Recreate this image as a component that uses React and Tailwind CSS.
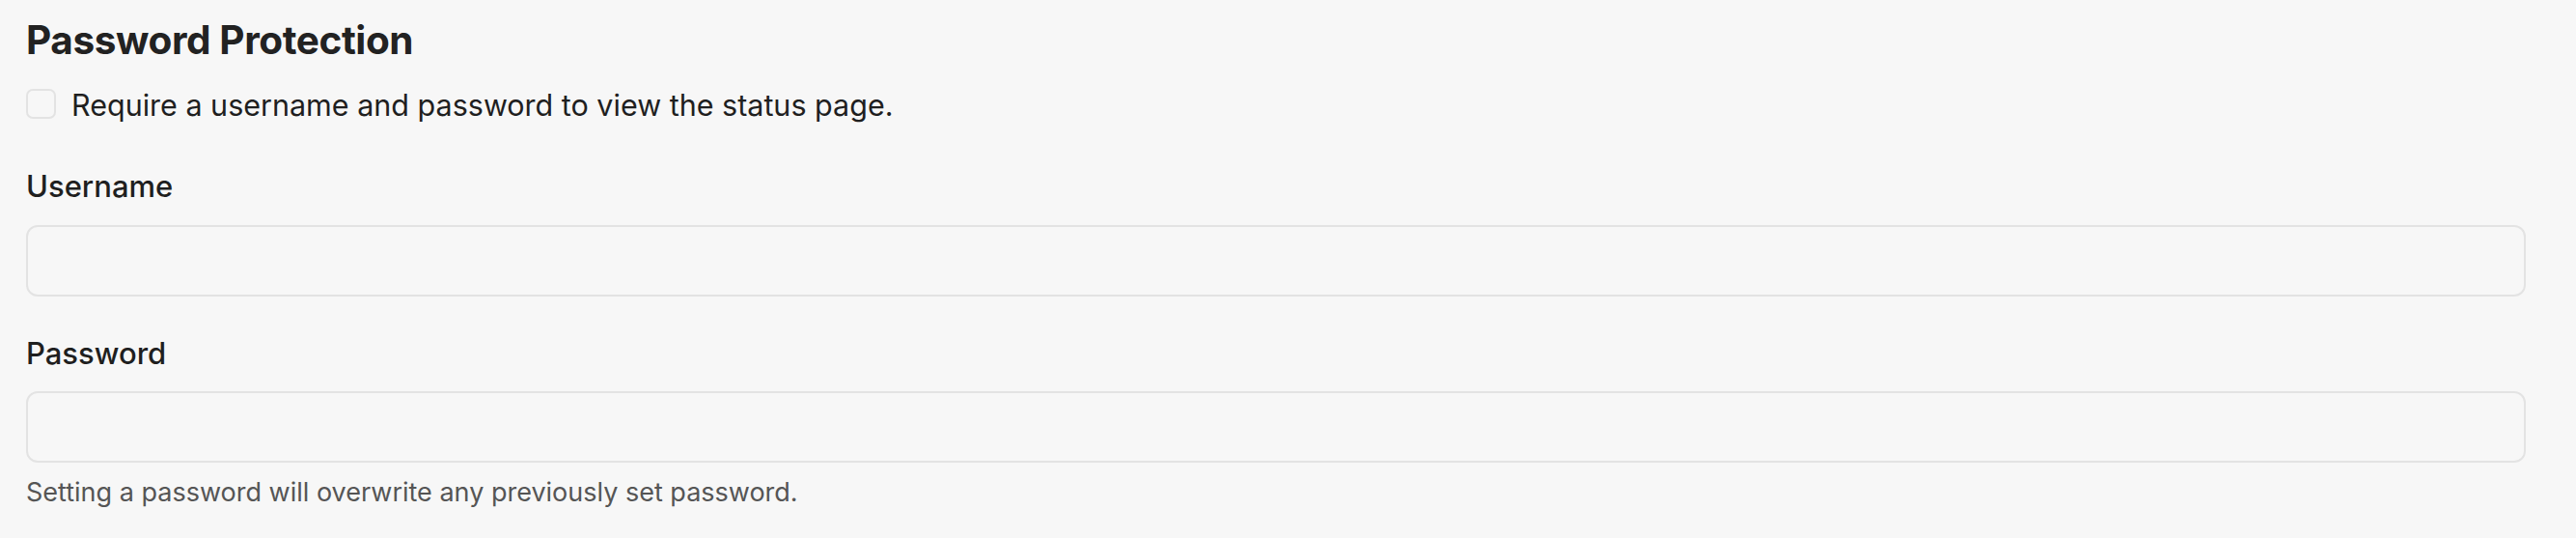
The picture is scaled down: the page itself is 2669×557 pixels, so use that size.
import React from "react";

export default function App() {
  return (
    <div className="w-full h-[557px] bg-[#f7f7f7] pl-[27px] pr-[52px] pt-[18px] font-['Inter',sans-serif] overflow-hidden">
      <h2 className="text-[40.5px] leading-[48px] font-bold text-[#222222] tracking-[-0.4px]">
        Password Protection
      </h2>
      <label className="mt-[26px] flex items-start gap-[16px]">
        <span className="block w-[31px] h-[31px] rounded-[7px] border-2 border-[#e3e3e3] bg-[#f7f7f7] shrink-0" />
        <span className="text-[30.5px] leading-[34px] text-[#1f1f1f]">
          Require a username and password to view the status page.
        </span>
      </label>
      <div className="mt-[48px] text-[31px] leading-[38px] font-medium text-[#1f1f1f]">Username</div>
      <input
        type="text"
        className="mt-[21px] block w-full h-[74px] rounded-[12px] border-2 border-[#e3e3e3] bg-[#f7f7f7] outline-none"
      />
      <div className="mt-[40px] text-[31px] leading-[38px] font-medium text-[#1f1f1f]">Password</div>
      <input
        type="password"
        className="mt-[20px] block w-full h-[74px] rounded-[12px] border-2 border-[#e3e3e3] bg-[#f7f7f7] outline-none"
      />
      <p className="mt-[15px] text-[27px] leading-[32px] text-[#555555]">
        Setting a password will overwrite any previously set password.
      </p>
    </div>
  );
}
